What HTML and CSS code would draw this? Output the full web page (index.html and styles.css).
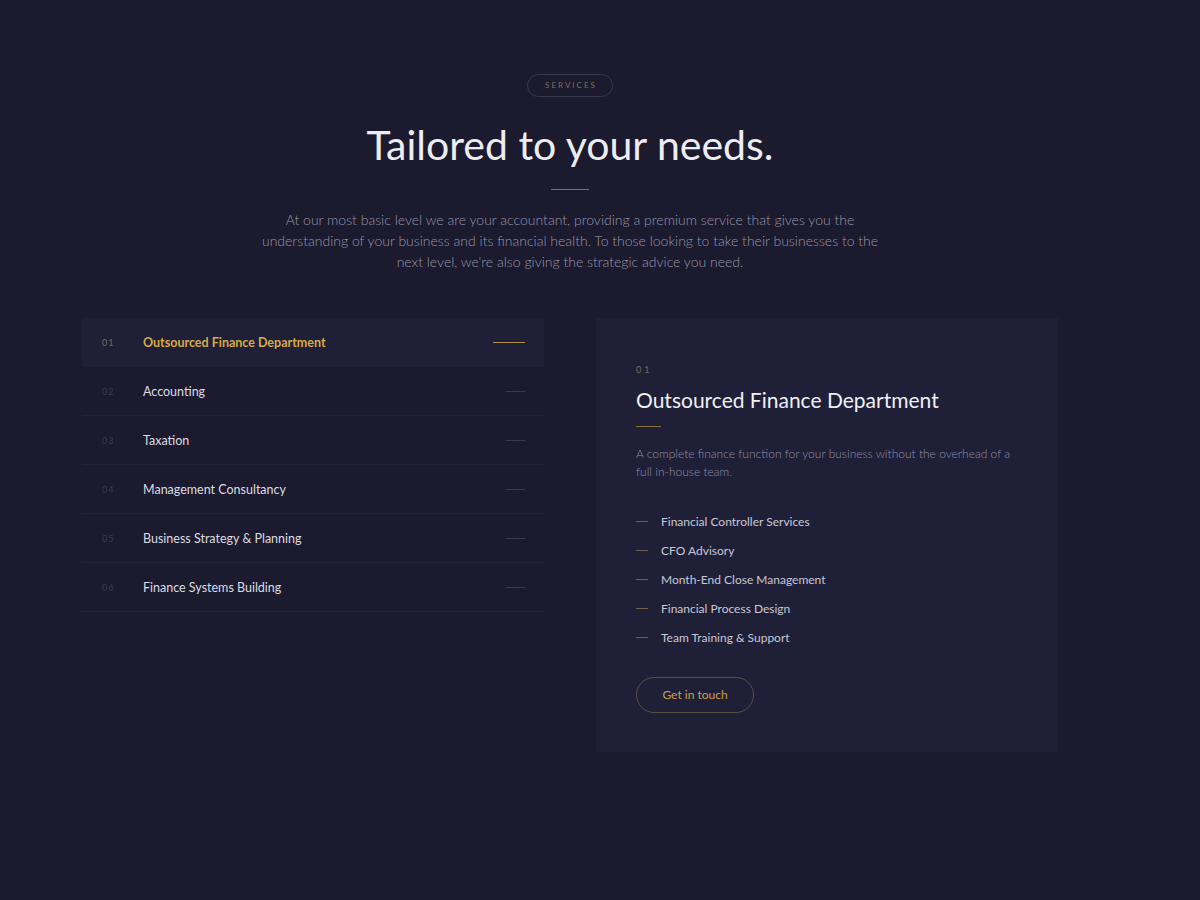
FILE: index.html
```html
<!DOCTYPE html>
<html lang="en">
<head>
    <meta charset="UTF-8">
    <title>Services</title>
    <link rel="stylesheet" href="styles.css">
</head>
<body>
<section class="services">
    <div class="intro">
        <span class="tag">SERVICES</span>
        <h1 class="title">Tailored to your needs.</h1>
        <div class="rule"></div>
        <p class="lead">At our most basic level we are your accountant, providing a premium service that gives you the understanding of your business and its financial health. To those looking to take their businesses to the next level, we're also giving the strategic advice you need.</p>
    </div>

    <div class="grid">
        <ul class="menu">
            <li class="item active"><span class="num">01</span><span class="name">Outsourced Finance Department</span><span class="dash"></span></li>
            <li class="item"><span class="num">02</span><span class="name">Accounting</span><span class="dash"></span></li>
            <li class="item"><span class="num">03</span><span class="name">Taxation</span><span class="dash"></span></li>
            <li class="item"><span class="num">04</span><span class="name">Management Consultancy</span><span class="dash"></span></li>
            <li class="item"><span class="num">05</span><span class="name">Business Strategy &amp; Planning</span><span class="dash"></span></li>
            <li class="item"><span class="num">06</span><span class="name">Finance Systems Building</span><span class="dash"></span></li>
        </ul>

        <div class="panel">
            <span class="panel-num">01</span>
            <h2 class="panel-title">Outsourced Finance Department</h2>
            <div class="panel-rule"></div>
            <p class="panel-text">A complete finance function for your business without the overhead of a full in-house team.</p>
            <ul class="points">
                <li>Financial Controller Services</li>
                <li>CFO Advisory</li>
                <li>Month-End Close Management</li>
                <li>Financial Process Design</li>
                <li>Team Training &amp; Support</li>
            </ul>
            <a class="btn" href="#">Get in touch</a>
        </div>
    </div>
</section>
</body>
</html>
```

FILE: styles.css
```css
body{
    margin: 0;
    background-color: #1b1a2e;
    font-family: Lato, "Open Sans", sans-serif;
    color: #e8e8ee;
}
.services{
    width: 976px;
    margin-left: 82px;
    padding-top: 74px;
}
.intro{
    display: flex;
    flex-direction: column;
    align-items: center;
    text-align: center;
}
.tag{
    height: 21px;
    line-height: 21px;
    padding: 0 15px 0 17px;
    border: 1px solid #3a3848;
    border-radius: 12px;
    font-size: 8px;
    letter-spacing: 2px;
    color: #7a7258;
}
.title{
    margin: 24px 0 0;
    font-size: 41px;
    font-weight: 400;
    line-height: 48px;
    color: #ededf1;
}
.rule{
    width: 38px;
    height: 1px;
    margin-top: 20px;
    background-color: #8a6f38;
}
.lead{
    width: 620px;
    margin: 19px 0 0;
    font-size: 14px;
    font-weight: 300;
    line-height: 21px;
    color: #9896aa;
}

.grid{
    display: grid;
    grid-template-columns: 462px 462px;
    column-gap: 52px;
    margin-top: 46px;
    align-items: start;
}
.menu{
    list-style: none;
    margin: 0;
    padding: 0;
}
.item{
    display: flex;
    align-items: center;
    height: 48px;
    padding: 0 19px 0 20px;
    border-bottom: 1px solid #222136;
}
.item.active{
    background-color: #1f1f38;
    border-bottom-color: #1f1f38;
}
.num{
    width: 41px;
    font-size: 9px;
    letter-spacing: 1px;
    color: #3d3c52;
}
.name{
    flex: 1;
    font-size: 12.5px;
    color: #dcdce4;
}
.dash{
    width: 19px;
    height: 1px;
    background-color: #3a3950;
}
.active .num{
    color: #7a6a48;
}
.active .name{
    color: #d8ab45;
    font-weight: 700;
}
.active .dash{
    width: 32px;
    background-color: #b08e3e;
}

.panel{
    background-color: #1f1f38;
    height: 434px;
    box-sizing: border-box;
    padding: 46px 40px 0;
}
.panel-num{
    display: block;
    font-size: 9px;
    letter-spacing: 3px;
    color: #766a52;
}
.panel-title{
    margin: 11px 0 0;
    font-size: 21px;
    font-weight: 400;
    line-height: 28px;
    color: #f0f0f4;
}
.panel-rule{
    width: 25px;
    height: 1px;
    margin-top: 12px;
    background-color: #8a6f38;
}
.panel-text{
    margin: 18px 0 0;
    font-size: 12px;
    font-weight: 300;
    line-height: 18px;
    color: #918fa4;
}
.points{
    list-style: none;
    margin: 26px 0 0;
    padding: 0;
}
.points li{
    display: flex;
    align-items: center;
    height: 29px;
    font-size: 12px;
    color: #c9c9d4;
}
.points li::before{
    content: "";
    width: 12px;
    height: 1px;
    margin-right: 13px;
    background-color: #6f6044;
}
.btn{
    display: inline-block;
    margin-top: 25px;
    width: 118px;
    height: 36px;
    box-sizing: border-box;
    line-height: 34px;
    text-align: center;
    border: 1px solid #5a4f42;
    border-radius: 18px;
    font-size: 12px;
    color: #c9a14c;
    text-decoration: none;
}
```
